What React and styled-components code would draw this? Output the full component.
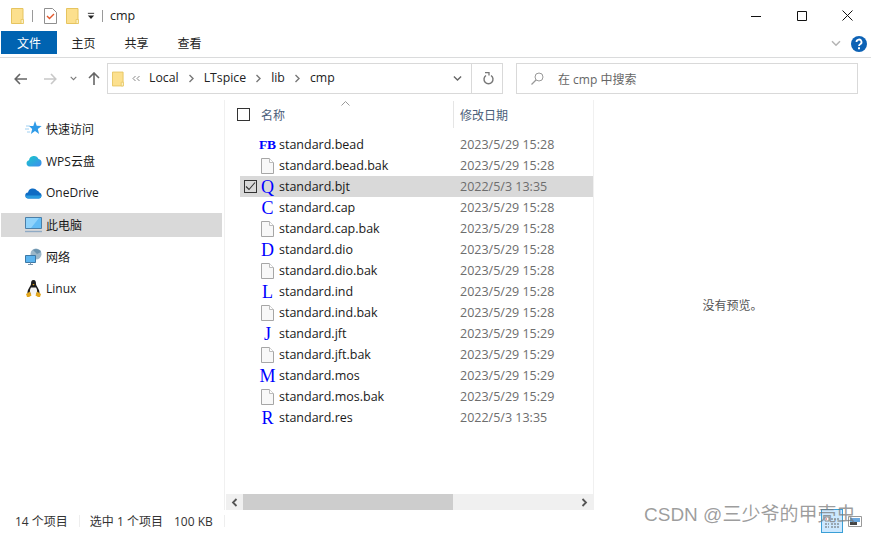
import React from 'react';
import styled, { createGlobalStyle } from 'styled-components';

const sans = `"Open Sans", "Noto Sans CJK SC", sans-serif`;

const Global = createGlobalStyle`
  html, body { margin: 0; padding: 0; background: #fff; overflow: hidden; }
  * { box-sizing: border-box; }
`;

const Win = styled.div`
  position: relative;
  width: 871px;
  height: 534px;
  display: flex;
  flex-direction: column;
  background: #fff;
  font-family: ${sans};
  font-size: 12px;
  color: #1a1a1a;
  overflow: hidden;
`;

const TitleBar = styled.div`
  height: 31px;
  display: flex;
  align-items: center;
  padding-left: 11px;
`;
const Spacer = styled.span`
  width: ${p => p.$w}px;
  flex: none;
`;
const QuickSep = styled.div`
  width: 1px;
  height: 12px;
  background: #9a9a9a;
  margin: 0 ${p => p.$gap}px 0 ${p => p.$left}px;
`;
const TitleText = styled.div`
  font-size: 12.5px;
  color: #222;
`;
const WinButtons = styled.div`
  margin-left: auto;
  padding-right: 1px;
  display: flex;
  align-items: center;
  height: 31px;
`;
const WinButton = styled.div`
  width: 45.5px;
  height: 31px;
  display: flex;
  align-items: center;
  justify-content: center;
`;

const TabRow = styled.div`
  height: 27px;
  display: flex;
  align-items: flex-start;
  padding-left: 1px;
  border-bottom: 1px solid #dadbdc;
`;
const Tab = styled.div`
  height: 23px;
  width: ${p => p.$w}px;
  display: flex;
  align-items: center;
  justify-content: center;
  font-size: 12px;
  background: ${p => (p.$active ? '#0063b1' : 'transparent')};
  color: ${p => (p.$active ? '#fff' : '#222')};
`;
const RibbonRight = styled.div`
  margin-left: auto;
  height: 25px;
  display: flex;
  align-items: center;
  gap: 10px;
  padding-right: 4px;
`;

const AddressRow = styled.div`
  height: 42px;
  display: flex;
  align-items: flex-start;
  padding: 5px 13px 0 14px;
`;
const NavArrows = styled.div`
  width: 93px;
  height: 31px;
  display: flex;
  align-items: center;
`;
const ArrowSlot = styled.div`
  width: ${p => p.$w}px;
  display: flex;
  justify-content: flex-start;
`;
const AddressBox = styled.div`
  width: 396px;
  height: 31px;
  border: 1px solid #d9d9d9;
  display: flex;
  align-items: center;
  padding-left: 4px;
`;
const Crumb = styled.span`
  font-size: 12.3px;
  line-height: 16px;
  margin-top: -1px;
  color: #222;
  white-space: nowrap;
`;
const CrumbSep = styled.span`
  display: flex;
  width: ${p => p.$w || 25}px;
  justify-content: center;
`;
const AddressEnd = styled.div`
  margin-left: auto;
  display: flex;
  height: 100%;
  align-items: center;
`;
const DropSlot = styled.div`
  width: 27px;
  display: flex;
  justify-content: center;
`;
const RefreshSlot = styled.div`
  width: 31px;
  height: 100%;
  border-left: 1px solid #d9d9d9;
  padding-left: 3px;
  display: flex;
  align-items: center;
  justify-content: center;
`;
const SearchBox = styled.div`
  margin-left: 13px;
  flex: 1;
  height: 31px;
  border: 1px solid #d9d9d9;
  display: flex;
  align-items: center;
  padding-left: 14px;
  gap: 14px;
  color: #666;
  font-size: 12px;
`;

const Main = styled.div`
  flex: 1;
  display: flex;
  min-height: 0;
`;
const Nav = styled.div`
  width: 225px;
  border-right: 1px solid #f0f0f0;
  padding: 17px 0 0 1px;
  display: flex;
  flex-direction: column;
  gap: 8px;
`;
const NavItem = styled.div`
  width: 221px;
  height: 24px;
  display: flex;
  align-items: center;
  padding: 0 0 1px 24px;
  gap: 4px;
  font-size: 12px;
  background: ${p => (p.$active ? '#d9d9d9' : 'transparent')};
  color: #1a1a1a;
`;
const NavIcon = styled.div`
  width: 17px;
  height: 17px;
  display: flex;
  align-items: center;
  justify-content: center;
`;

const ListPane = styled.div`
  width: 369px;
  border-right: 1px solid #f0f0f0;
  display: flex;
  flex-direction: column;
  position: relative;
`;
const HeaderRow = styled.div`
  height: 28px;
  display: flex;
  align-items: center;
  padding: 1px 0 0 12px;
  margin-bottom: 6px;
  position: relative;
`;
const HeadBox = styled.div`
  width: 13px;
  height: 13px;
  border: 1px solid #333;
  margin-right: 11px;
`;
const HeadName = styled.div`
  width: 192px;
  color: #4c607a;
  font-size: 12px;
`;
const HeadDate = styled.div`
  height: 27px;
  border-left: 1px solid #e5e5e5;
  padding-left: 6px;
  display: flex;
  align-items: center;
  color: #4c607a;
  font-size: 12px;
`;
const SortCaret = styled.svg`
  position: absolute;
  left: 116px;
  top: 1px;
`;
const Rows = styled.div`
  flex: 1;
  display: flex;
  flex-direction: column;
`;
const Row = styled.div`
  height: 21px;
  margin-left: 15px;
  display: flex;
  align-items: center;
  background: ${p => (p.$selected ? '#d9d9d9' : 'transparent')};
`;
const CheckSlot = styled.div`
  width: 20px;
  display: flex;
  justify-content: center;
  padding-left: 1px;
`;
const CheckBox = styled.div`
  width: 13px;
  height: 13px;
  border: 1px solid #333;
  display: flex;
  align-items: center;
  justify-content: center;
`;
const FileIcon = styled.div`
  width: 15px;
  height: 16px;
  display: flex;
  align-items: center;
  justify-content: center;
  font-family: "Liberation Serif", serif;
  font-weight: ${p => (p.$wide ? 700 : 400)};
  font-size: ${p => (p.$wide ? 13.5 : 18)}px;
  line-height: 16px;
  color: #0000ff;
  white-space: nowrap;
`;
const FileName = styled.div`
  width: 181px;
  margin-left: 4px;
  font-size: 12.5px;
  line-height: 16px;
  color: #1a1a1a;
`;
const FileDate = styled.div`
  font-size: 12.5px;
  line-height: 16px;
  color: #6d6d6d;
`;
const ScrollBar = styled.div`
  height: 16px;
  margin: 0 0 0 1px;
  background: #f0f0f0;
  display: flex;
  align-items: center;
`;
const ScrollBtn = styled.div`
  width: 17px;
  height: 16px;
  display: flex;
  align-items: center;
  justify-content: center;
`;
const ScrollThumb = styled.div`
  width: 210px;
  height: 16px;
  margin-right: auto;
  background: #cdcdcd;
`;

const Preview = styled.div`
  flex: 1;
  display: flex;
  align-items: center;
  justify-content: center;
  color: #555;
  font-size: 12px;
`;

const StatusBar = styled.div`
  height: 24px;
  display: flex;
  align-items: center;
  padding: 0 0 2px 15px;
  font-size: 12px;
  color: #333;
`;
const StatusSep = styled.div`
  width: 1px;
  height: 12px;
  background: #eee;
  margin: 0 ${p => p.$r}px 0 ${p => p.$l}px;
`;
const ViewIcons = styled.div`
  position: absolute;
  right: 9px;
  bottom: 1px;
  display: flex;
  align-items: center;
  gap: 5px;
`;
const ViewActive = styled.div`
  width: 22px;
  height: 24px;
  background: #cce8ff;
  border: 1px solid #3a9fd6;
  display: flex;
  align-items: flex-end;
  justify-content: center;
  padding-bottom: 3px;
`;
const Watermark = styled.div`
  position: absolute;
  left: 644px;
  top: 503px;
  font-family: "Liberation Sans", "Noto Sans CJK SC", sans-serif;
  font-size: 19px;
  line-height: 24px;
  color: rgba(120, 120, 120, 0.72);
  white-space: nowrap;
`;

const Folder = ({ size = 13, h = 16 }) => (
  <svg width={size} height={h} viewBox="0 0 13 16">
    <path d="M.5.5h11.5v15H.5z" fill="#fce08e" stroke="#e6c45f" />
    <path d="M10 11.5h2.5v4H10z" fill="#fbf0c4" stroke="#e6c45f" strokeWidth=".8" />
  </svg>
);
const Doc = () => (
  <svg width="13" height="16" viewBox="0 0 13 16">
    <path d="M.5.5h8l4 4v11H.5z" fill="#f8f8f8" stroke="#a6a6a6" />
    <path d="M8.5.5v4h4" fill="#fff" stroke="#bcbcbc" />
  </svg>
);
const Chevron = () => (
  <svg width="7" height="9" viewBox="0 0 7 9">
    <path d="M1.5 1l3.5 3.5L1.5 8" fill="none" stroke="#777" strokeWidth="1.4" />
  </svg>
);
const Down = ({ c = '#666', w = 10 }) => (
  <svg width={w} height="7" viewBox="0 0 10 7">
    <path d="M1 1.2l4 4 4-4" fill="none" stroke={c} strokeWidth="1.5" />
  </svg>
);

const navItems = [
  {
    label: '快速访问',
    icon: (
      <svg width="17" height="15" viewBox="0 0 17 15">
        <path d="M10 0l1.7 4.7 5 .2-3.9 3.1 1.3 4.9-4.100-2.800-4.100 2.800 1.300-4.900L4 5h4.300z" fill="#2f9be8" />
        <path d="M1 5h4M0 8h4M2 11h3" stroke="#9fd0f2" strokeWidth="1" />
      </svg>
    ),
  },
  {
    label: 'WPS云盘',
    icon: (
      <svg width="16" height="13" viewBox="0 0 16 13">
        <defs>
          <linearGradient id="wps" x1="0" y1="0" x2="1" y2="1">
            <stop offset="0" stopColor="#18c8c8" />
            <stop offset="1" stopColor="#3f8cf0" />
          </linearGradient>
        </defs>
        <path d="M3.500 12.500a3.200 3.200 0 0 1-.5-6.300A5 5 0 0 1 12.500 5a3.800 3.800 0 0 1-.3 7.500z" fill="url(#wps)" />
      </svg>
    ),
  },
  {
    label: 'OneDrive',
    icon: (
      <svg width="17" height="12" viewBox="0 0 17 12">
        <path d="M3.500 11.500a3 3 0 0 1-.5-6A5 5 0 0 1 12 3.600a4 4 0 0 1 2.500 1.900 3.100 3.100 0 0 1-.5 6z" fill="#0f6cc4" />
        <path d="M0.700 8.500h15.800a3 3 0 0 1-2.500 3H3.500a3 3 0 0 1-2.800-3z" fill="#2a9be0" />
      </svg>
    ),
  },
  {
    label: '此电脑',
    active: true,
    icon: (
      <svg width="17" height="16" viewBox="0 0 17 16">
        <path d="M.5.500h16v11H.5z" fill="#62bcf5" stroke="#4a7fa8" />
        <path d="M1 1h13L6 11H1z" fill="#8fd3fb" />
        <path d="M0 14.500h17" stroke="#8faac4" strokeWidth="1.400" />
      </svg>
    ),
  },
  {
    label: '网络',
    icon: (
      <svg width="17" height="17" viewBox="0 0 17 17">
        <circle cx="11" cy="6" r="5.500" fill="#9bb7c9" />
        <path d="M8 2a5.500 5.500 0 0 1 8 2l-4 2z" fill="#6b93ae" />
        <path d="M.5 7.500h10v7H.5z" fill="#5bb4ef" stroke="#3d78a5" />
        <path d="M3 16.500h5M5.500 14.500v2" stroke="#7b95ad" />
      </svg>
    ),
  },
  {
    label: 'Linux',
    icon: (
      <svg width="15" height="17" viewBox="0 0 15 17">
        <path d="M7.500 0C5.300 0 5 2 5 4c0 2-4 5-3.500 10h12C14 9 10 6 10 4c0-2-.3-4-2.500-4z" fill="#1d1d1d" />
        <path d="M5 7.500c-1.500 2-1.500 5 0 7h5c1.500-2 1.500-5 0-7z" fill="#f4f4f4" />
        <path d="M0 14l4-2.500 1.500 4L3 17H1zM15 14l-4-2.500-1.500 4L12 17h2z" fill="#e2a61c" />
        <path d="M6.300 4h2.400L7.500 5.500z" fill="#e2a61c" />
      </svg>
    ),
  },
];

const files = [
  { name: 'standard.bead', date: '2023/5/29 15:28', glyph: 'FB', wide: true },
  { name: 'standard.bead.bak', date: '2023/5/29 15:28' },
  { name: 'standard.bjt', date: '2022/5/3 13:35', glyph: 'Q', selected: true },
  { name: 'standard.cap', date: '2023/5/29 15:28', glyph: 'C' },
  { name: 'standard.cap.bak', date: '2023/5/29 15:28' },
  { name: 'standard.dio', date: '2023/5/29 15:28', glyph: 'D' },
  { name: 'standard.dio.bak', date: '2023/5/29 15:28' },
  { name: 'standard.ind', date: '2023/5/29 15:28', glyph: 'L' },
  { name: 'standard.ind.bak', date: '2023/5/29 15:28' },
  { name: 'standard.jft', date: '2023/5/29 15:29', glyph: 'J' },
  { name: 'standard.jft.bak', date: '2023/5/29 15:29' },
  { name: 'standard.mos', date: '2023/5/29 15:29', glyph: 'M' },
  { name: 'standard.mos.bak', date: '2023/5/29 15:29' },
  { name: 'standard.res', date: '2022/5/3 13:35', glyph: 'R' },
];

export default function App() {
  return (
    <>
      <Global />
      <Win>
        <TitleBar>
          <Folder />
          <QuickSep $left={8} $gap={11} />
          <svg width="13" height="16" viewBox="0 0 13 16">
            <path d="M.5.500h8l4 4v11H.5z" fill="#fff" stroke="#8f8f8f" />
            <path d="M3 8l2.500 2.500L10 6" fill="none" stroke="#e2572b" strokeWidth="1.400" />
          </svg>
          <Spacer $w={9} />
          <Folder />
          <Spacer $w={8} />
          <svg width="8" height="8" viewBox="0 0 9 8">
            <path d="M1 1h7" stroke="#222" />
            <path d="M1 3.500h7L4.500 7.500z" fill="#222" />
          </svg>
          <QuickSep $left={7} $gap={7} />
          <TitleText>cmp</TitleText>
          <WinButtons>
            <WinButton>
              <svg width="10" height="10" viewBox="0 0 10 10"><path d="M0 5.500h10" stroke="#111" /></svg>
            </WinButton>
            <WinButton>
              <svg width="10" height="10" viewBox="0 0 10 10"><path d="M.5.500h9v9h-9z" fill="none" stroke="#111" /></svg>
            </WinButton>
            <WinButton>
              <svg width="11" height="11" viewBox="0 0 11 11"><path d="M.5.500l10 10M10.500.500l-10 10" stroke="#111" /></svg>
            </WinButton>
          </WinButtons>
        </TitleBar>

        <TabRow>
          <Tab $active $w={56}>文件</Tab>
          <Tab $w={53}>主页</Tab>
          <Tab $w={53}>共享</Tab>
          <Tab $w={53}>查看</Tab>
          <RibbonRight>
            <Down c="#b4b4b4" w={10} />
            <svg width="16" height="16" viewBox="0 0 16 16">
              <circle cx="8" cy="8" r="8" fill="#0d62b5" />
              <path d="M5.500 6a2.500 2.500 0 1 1 3.700 2.200c-.8.500-1.200.8-1.200 1.800" fill="none" stroke="#fff" strokeWidth="1.800" />
              <path d="M7 11.200h2v2H7z" fill="#fff" />
            </svg>
          </RibbonRight>
        </TabRow>

        <AddressRow>
          <NavArrows>
            <ArrowSlot $w={30}>
              <svg width="13" height="12" viewBox="0 0 13 12"><path d="M6 1L1.200 6 6 11M1.200 6H13" fill="none" stroke="#666" strokeWidth="1.600" /></svg>
            </ArrowSlot>
            <ArrowSlot $w={26}>
              <svg width="13" height="12" viewBox="0 0 13 12"><path d="M7 1l4.800 5L7 11M11.800 6H0" fill="none" stroke="#c8c8c8" strokeWidth="1.600" /></svg>
            </ArrowSlot>
            <ArrowSlot $w={18}><Down c="#777" w={7} /></ArrowSlot>
            <ArrowSlot $w={19}>
              <svg width="12" height="13" viewBox="0 0 12 13"><path d="M1 6l5-5 5 5M6 1v12" fill="none" stroke="#666" strokeWidth="1.600" /></svg>
            </ArrowSlot>
          </NavArrows>
          <AddressBox>
            <Folder size={12} h={16} />
            <CrumbSep>
              <svg width="9" height="7" viewBox="0 0 9 7"><path d="M3.500 1L1 3.500 3.500 6M7.500 1L5 3.500 7.500 6" fill="none" stroke="#888" /></svg>
            </CrumbSep>
            <Crumb>Local</Crumb>
            <CrumbSep><Chevron /></CrumbSep>
            <Crumb>LTspice</Crumb>
            <CrumbSep><Chevron /></CrumbSep>
            <Crumb>lib</Crumb>
            <CrumbSep><Chevron /></CrumbSep>
            <Crumb>cmp</Crumb>
            <AddressEnd>
              <DropSlot><Down c="#666" w={9} /></DropSlot>
              <RefreshSlot>
                <svg width="11" height="13" viewBox="0 0 11 13">
                  <path d="M3 3.500a4.500 4.500 0 1 0 5 0" fill="none" stroke="#777" strokeWidth="1.400" />
                  <path d="M2 .500h4v3" fill="none" stroke="#777" strokeWidth="1.300" />
                </svg>
              </RefreshSlot>
            </AddressEnd>
          </AddressBox>
          <SearchBox>
            <svg width="13" height="13" viewBox="0 0 13 13">
              <circle cx="8" cy="5" r="4" fill="none" stroke="#999" />
              <path d="M5 8l-4.500 4.500" stroke="#999" strokeWidth="1.200" />
            </svg>
            <span>在 cmp 中搜索</span>
          </SearchBox>
        </AddressRow>

        <Main>
          <Nav>
            {navItems.map(item => (
              <NavItem key={item.label} $active={item.active}>
                <NavIcon>{item.icon}</NavIcon>
                {item.label}
              </NavItem>
            ))}
          </Nav>
          <ListPane>
            <HeaderRow>
              <HeadBox />
              <HeadName>名称</HeadName>
              <HeadDate>修改日期</HeadDate>
              <SortCaret width="9" height="5" viewBox="0 0 9 5">
                <path d="M.5 4.500l4-4 4 4" fill="none" stroke="#999" />
              </SortCaret>
            </HeaderRow>
            <Rows>
              {files.map(f => (
                <Row key={f.name} $selected={f.selected}>
                  <CheckSlot>
                    {f.selected && (
                      <CheckBox>
                        <svg width="11" height="11" viewBox="0 0 11 11">
                          <path d="M1 5.500l3 3 6-7" fill="none" stroke="#333" strokeWidth="1.100" />
                        </svg>
                      </CheckBox>
                    )}
                  </CheckSlot>
                  <FileIcon $wide={f.wide}>
                    {f.glyph || <Doc />}
                  </FileIcon>
                  <FileName>{f.name}</FileName>
                  <FileDate>{f.date}</FileDate>
                </Row>
              ))}
            </Rows>
            <ScrollBar>
              <ScrollBtn>
                <svg width="7" height="9" viewBox="0 0 7 9"><path d="M5.500 1L2 4.500 5.500 8" fill="none" stroke="#555" strokeWidth="1.800" /></svg>
              </ScrollBtn>
              <ScrollThumb />
              <ScrollBtn>
                <svg width="7" height="9" viewBox="0 0 7 9"><path d="M1.500 1L5 4.500 1.500 8" fill="none" stroke="#555" strokeWidth="1.800" /></svg>
              </ScrollBtn>
            </ScrollBar>
          </ListPane>
          <Preview>没有预览。</Preview>
        </Main>

        <StatusBar>
          14 个项目
          <StatusSep $l={11} $r={10} />
          选中 1 个项目
          <Spacer $w={11} />
          100 KB
          <StatusSep $l={11} $r={0} />
        </StatusBar>
        <ViewIcons>
          <ViewActive>
            <svg width="16" height="13" viewBox="0 0 16 13">
              <path d="M1 1h4v4H1z" fill="#fff" stroke="#888" />
              <path d="M2 3h1" stroke="#d33" />
              <path d="M7 3h8M7 8h8M1 8h4M1 11h4M7 11h8" stroke="#666" strokeDasharray="2 1" />
            </svg>
          </ViewActive>
          <svg width="14" height="11" viewBox="0 0 14 11">
            <path d="M.5.500h13v10H.5z" fill="#fff" stroke="#999" />
            <path d="M2 2h10v4H2z" fill="#6aa9e0" />
            <path d="M2 6h7v3H2z" fill="#444" />
          </svg>
        </ViewIcons>
        <Watermark>CSDN @三少爷的甲壳虫</Watermark>
      </Win>
    </>
  );
}
